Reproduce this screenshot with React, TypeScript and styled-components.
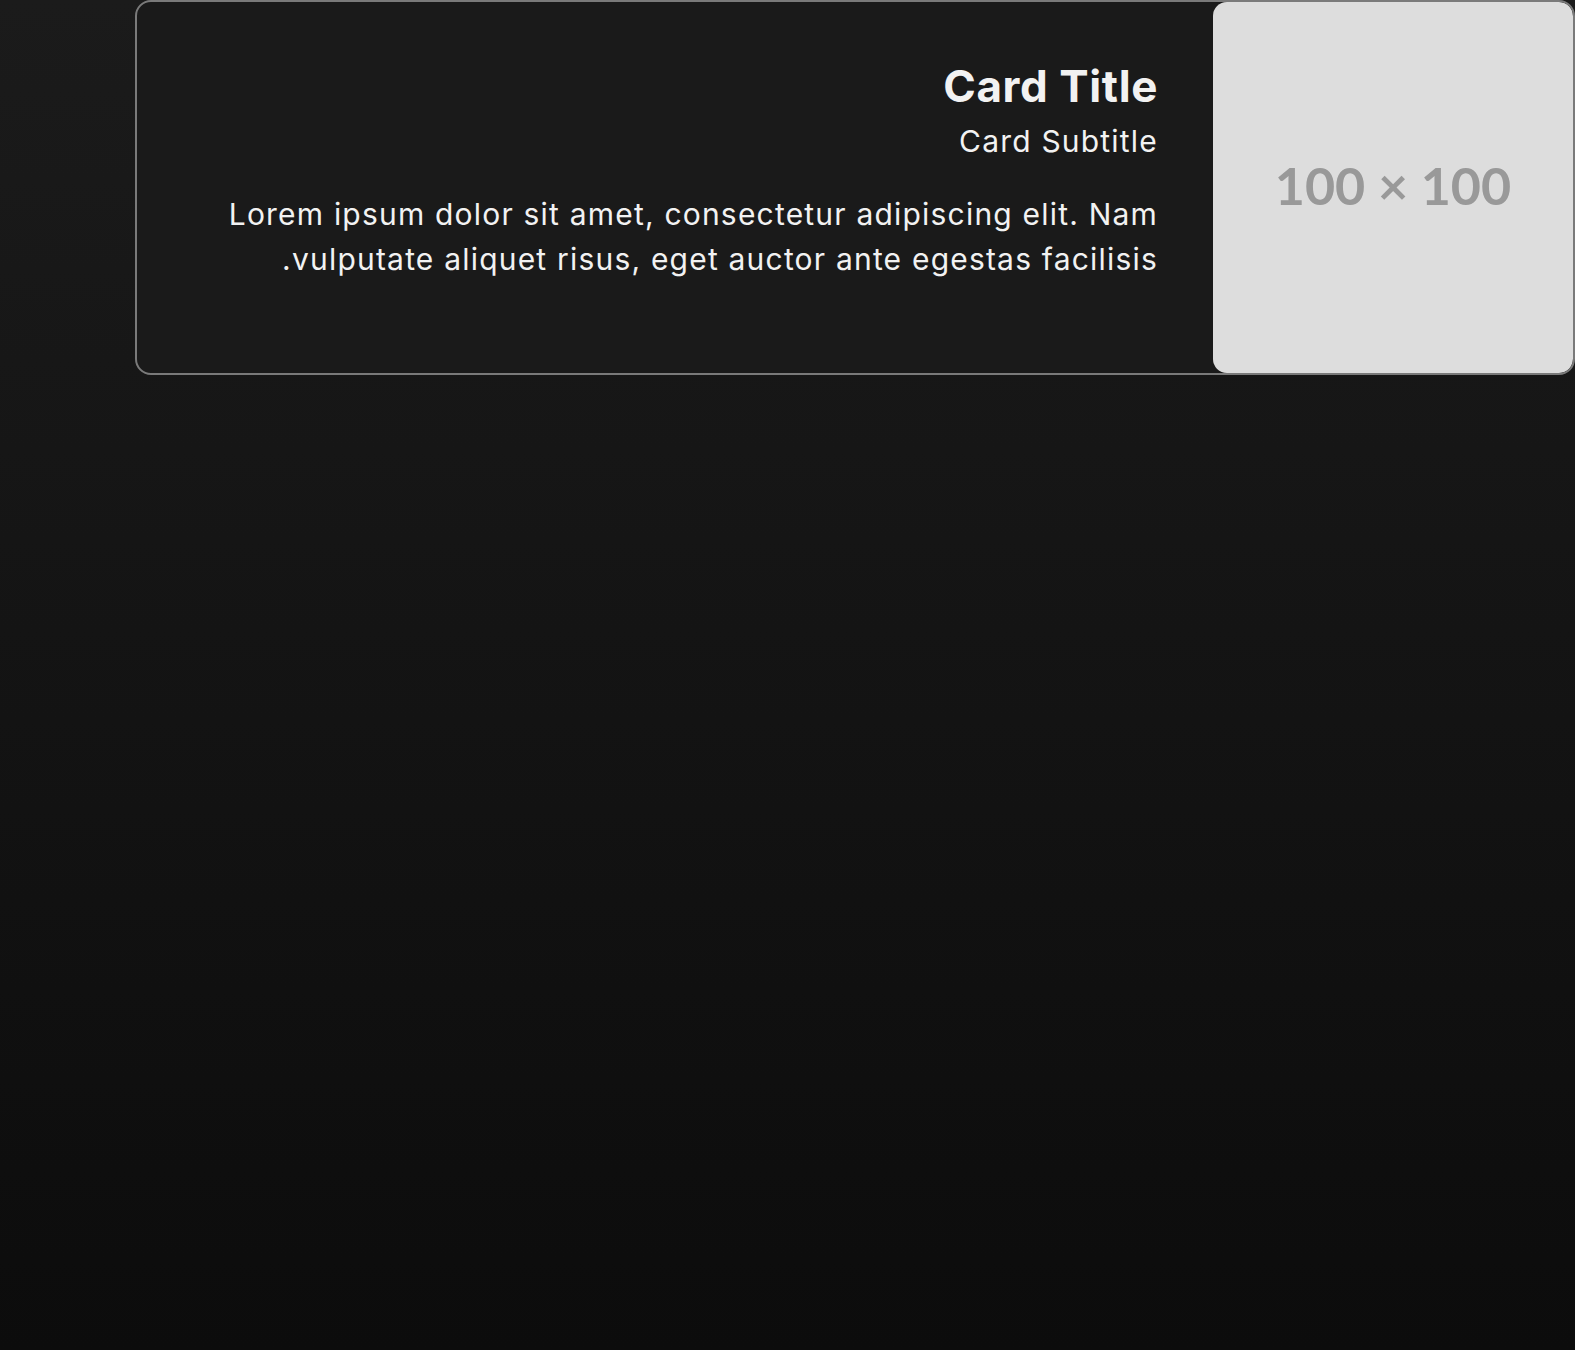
import React from "react";
import styled, { createGlobalStyle } from "styled-components";

const Global = createGlobalStyle`
  html, body { margin: 0; padding: 0; }
  body {
    min-height: 1350px;
    background: linear-gradient(180deg, #1b1b1b 0%, #0c0c0c 100%);
    font-family: Inter, "Noto Sans", sans-serif;
    color: #f2f2f2;
  }
`;

const Page = styled.div`
  padding-left: 135px;
  width: 1440px;
`;

const Card = styled.div`
  direction: rtl;
  display: flex;
  flex-direction: row;
  align-items: stretch;
  box-sizing: border-box;
  width: 1440px;
  background: #1a1a1a;
  border: 2px solid #7a7a7a;
  border-radius: 16px;
  overflow: hidden;
`;

const Placeholder = styled.div`
  flex: 0 0 360px;
  display: flex;
  align-items: center;
  justify-content: center;
  padding-bottom: 4px;
  box-sizing: border-box;
  background: #dddddd;
  border-radius: 14px;
  color: #999999;
  font-family: Lato, "Open Sans", sans-serif;
  font-weight: 700;
  font-size: 52px;
  direction: ltr;
`;

const Body = styled.div`
  flex: 1 1 auto;
  padding: 58px 55px 61px;
  text-align: right;
`;

const Title = styled.h5`
  margin: 0;
  font-size: 44px;
  line-height: 1.2;
  font-weight: 700;
  letter-spacing: 0.6px;
  color: #f2f2f2;
`;

const Subtitle = styled.h6`
  margin: 10px 0 0;
  font-size: 30px;
  line-height: 1.2;
  font-weight: 400;
  letter-spacing: 1.2px;
  color: #f2f2f2;
`;

const Text = styled.p`
  margin: 33px 0 30px;
  font-size: 30px;
  line-height: 45px;
  letter-spacing: 1.2px;
  color: #f2f2f2;
`;

export default function App() {
  return (
    <>
      <Global />
      <Page>
        <Card>
          <Placeholder>100 × 100</Placeholder>
          <Body>
            <Title>Card Title</Title>
            <Subtitle>Card Subtitle</Subtitle>
            <Text>
              Lorem ipsum dolor sit amet, consectetur adipiscing elit. Nam vulputate aliquet risus, eget auctor ante egestas facilisis.
            </Text>
          </Body>
        </Card>
      </Page>
    </>
  );
}
